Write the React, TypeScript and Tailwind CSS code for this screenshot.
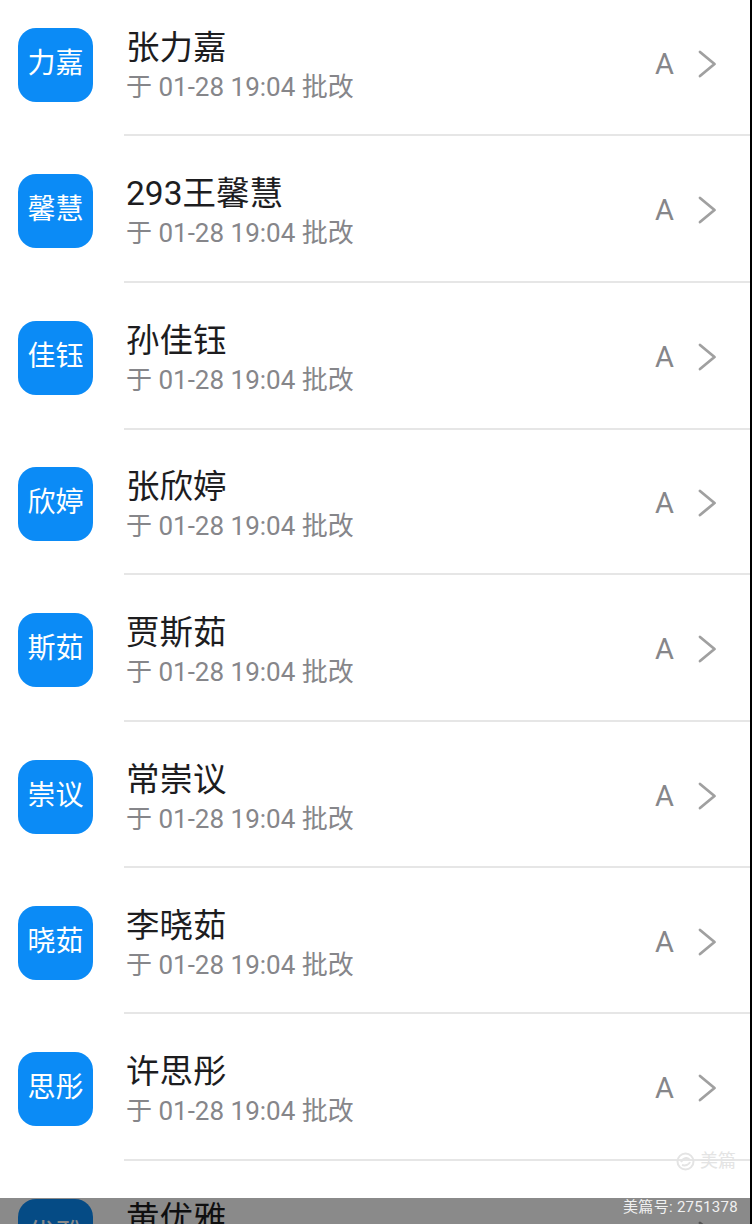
const rows = [
  { short: '力嘉', name: '张力嘉', h: 'h-[146px]' },
  { short: '馨慧', name: '293王馨慧', h: 'h-[147px]' },
  { short: '佳钰', name: '孙佳钰', h: 'h-[147px]' },
  { short: '欣婷', name: '张欣婷', h: 'h-[145px]' },
  { short: '斯茹', name: '贾斯茹', h: 'h-[147px]' },
  { short: '崇议', name: '常崇议', h: 'h-[146px]' },
  { short: '晓茹', name: '李晓茹', h: 'h-[146px]' },
  { short: '思彤', name: '许思彤', h: 'h-[147px]' },
  { short: '优雅', name: '黄优雅', h: 'h-[147px]' },
];

function Chevron() {
  return (
    <svg width="19" height="28" viewBox="0 0 19 28" fill="none" className="ml-[24px] mt-[3px] shrink-0">
      <path d="M2 2 L16.5 14 L2 26" stroke="#a0a0a0" strokeWidth="2.8" strokeLinecap="round" strokeLinejoin="round" />
    </svg>
  );
}

function Row({ short, name, h }: { short: string; name: string; h: string }) {
  return (
    <div className={`${h} flex items-center pl-[18px]`}>
      <div className="w-[75px] h-[74px] mt-[3px] shrink-0 rounded-[18px] bg-[#0b8bf6] flex items-center justify-center pb-[2px] text-white text-[28px] leading-none">
        {short}
      </div>
      <div className="ml-[31px] pl-[2px] flex-1 h-full flex items-center border-b-2 border-[#e6e6e6] pr-[33px]">
        <div className="flex-1 min-w-0 pt-[9px]">
          <p className="text-[33.5px] leading-[40px] text-[#1d1d1f]">{name}</p>
          <p className="text-[26px] leading-[38px] text-[#86868a]">于 01-28 19:04 批改</p>
        </div>
        <span className="text-[29px] leading-none text-[#86868a] pt-[4px]">A</span>
        <Chevron />
      </div>
    </div>
  );
}

export default function App() {
  return (
    <div className="relative w-[752px] h-[1224px] overflow-hidden bg-white font-['Roboto','Noto_Sans_CJK_SC',sans-serif]">
      <div className="-mt-[10px] border-r-2 border-black">
        {rows.map((r) => (
          <Row key={r.name} {...r} />
        ))}
      </div>
      <div className="absolute left-[676px] top-[1151px] flex items-center gap-[5px] text-[#e4e4e4]">
        <svg width="19" height="19" viewBox="0 0 19 19" fill="none">
          <circle cx="9.5" cy="9.5" r="8" stroke="#e4e4e4" strokeWidth="2" />
          <path d="M5 10 C8 5 12 5 14 8 M6 13 C9 14 13 13 14 10" stroke="#e4e4e4" strokeWidth="2" />
        </svg>
        <span className="text-[18px] leading-[20px]">美篇</span>
      </div>
      <div className="absolute left-0 right-0 bottom-0 h-[26px] bg-[rgba(0,0,0,0.46)] flex justify-end pr-[14px] text-[15px] leading-[18px] tracking-[0.3px] text-[#f0f0f0]">
        美篇号: 2751378
      </div>
    </div>
  );
}
